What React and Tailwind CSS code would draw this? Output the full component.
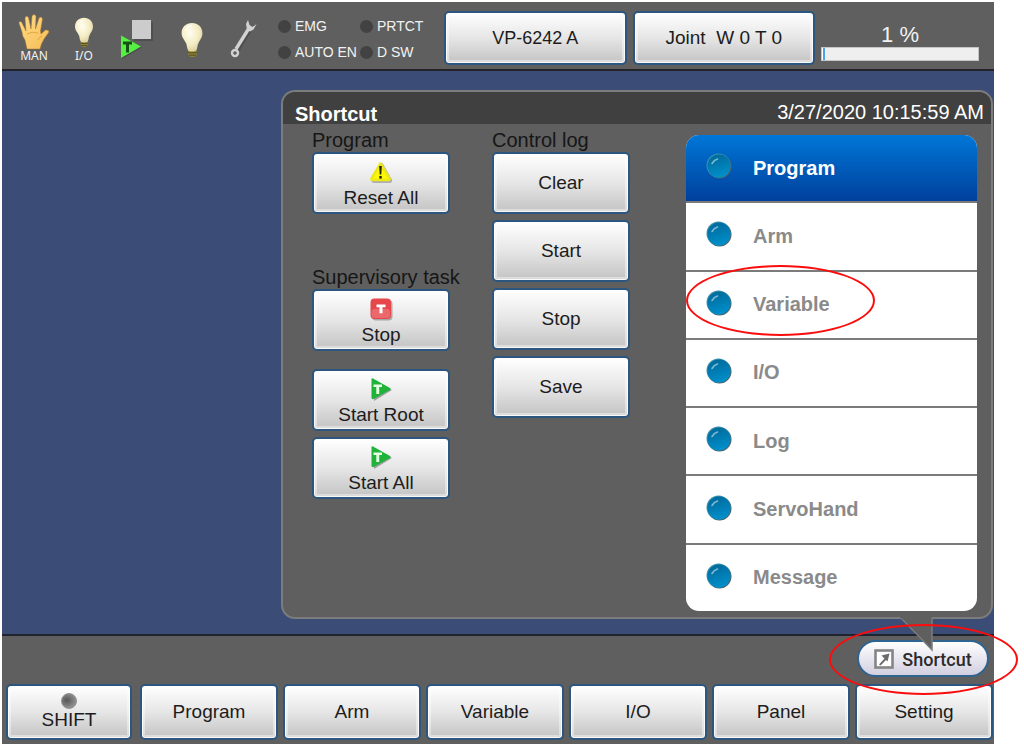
import React from "react";

const MENU = ["Program", "Arm", "Variable", "I/O", "Log", "ServoHand", "Message"];
const NAV = ["Program", "Arm", "Variable", "I/O", "Panel", "Setting"];

const BUTTON =
  "flex flex-col items-center rounded-[5px] border-2 border-[#2a567f] bg-linear-to-b from-white via-[#e6e6e6] to-[#c3c3c3] text-[#1c1c1c] shadow-[inset_0_0_0_1px_rgba(255,255,255,0.8),inset_0_0_0_3px_rgba(255,255,255,0.4)]";

function PlainButton({ children, className = "" }) {
  return (
    <button type="button" className={`${BUTTON} justify-center ${className}`}>
      {children}
    </button>
  );
}

function PanelButton({ icon, children }) {
  return (
    <button
      type="button"
      className={`${BUTTON} h-[62px] w-[138px] text-[19px] leading-[22px] ${icon ? "gap-[3px] pt-[6px]" : "justify-center"}`}
    >
      {icon}
      <span>{children}</span>
    </button>
  );
}

function HandIcon() {
  return (
    <svg width="32" height="36" viewBox="0 0 32 36" aria-hidden="true">
      <defs>
        <linearGradient id="hand" x1="0" y1="0" x2="1" y2="1">
          <stop offset="0" stopColor="#ffdb8c" />
          <stop offset="1" stopColor="#f6bd52" />
        </linearGradient>
      </defs>
      <path
        d="M9 35 L7 26 Q4 22 4 18 L1 9 Q1 6.500 3.500 8 L8 17 L7 4 Q8 1 10.500 3.500 L13 15 L14 2 Q16 -1 18 2 L17.500 15 L21 4 Q23.500 1.500 24.500 5 L22.500 17 L23 20 L27.500 16 Q31 15.500 31 18 L26 25 Q23 30 22 35 Z"
        fill="url(#hand)"
        stroke="#a5742c"
        strokeWidth="0.500"
        strokeLinejoin="round"
      />
      <path d="M9 20 Q14 17 20 19 M20 26 Q22 22 24 22" fill="none" stroke="#dd9c36" strokeWidth="0.800" />
    </svg>
  );
}

function BulbIcon({ className, id }) {
  return (
    <svg className={className} viewBox="0 0 24 38" aria-hidden="true">
      <defs>
        <radialGradient id={id} cx="0.4" cy="0.35" r="0.7">
          <stop offset="0" stopColor="#fffef0" />
          <stop offset="0.6" stopColor="#f4ecc4" />
          <stop offset="1" stopColor="#d9cd9c" />
        </radialGradient>
      </defs>
      <path d="M8 30h9v4q-1 3-4.500 3T8 34z" fill="#8d8336" />
      <path d="M8 32.500h9M9 35h7" stroke="#4d471c" strokeWidth="1" />
      <path
        d="M12 1C5.500 1 1 5.500 1 11.500c0 5 3.500 7.500 5 11.500.700 2 .500 5 2 7 1 1.500 7 1.500 8.500 0 1.500-2 1-5 2-7 1.500-4 4.500-6.500 4.500-11.500C23 5.500 18.500 1 12 1z"
        fill={`url(#${id})`}
      />
      <path d="M5 9q2-4 6-5" stroke="#ffffff" strokeWidth="1.500" fill="none" strokeLinecap="round" />
    </svg>
  );
}

function TaskStateIcon() {
  return (
    <svg width="34" height="42" viewBox="0 0 34 42" aria-hidden="true">
      <rect x="14" y="5" width="19" height="19" fill="#3f3f3f" opacity="0.5" />
      <rect x="12" y="3" width="19" height="19" fill="#cccccc" />
      <path d="M2 20 L22 30.500 L2 42 Z" fill="#3a3a3a" opacity="0.5" />
      <path d="M1 18.500 L21 29.500 L1 41 Z" fill="#55f043" />
      <path d="M3 24.500h9v3H9v8H6v-8H3z" fill="#174d16" />
    </svg>
  );
}

function WrenchIcon() {
  return (
    <svg width="28" height="40" viewBox="0 0 28 40" aria-hidden="true">
      <path d="M8 32 L20 12" stroke="#3f3f3f" opacity="0.5" strokeWidth="3.500" />
      <path d="M6 31 L18.500 11" stroke="#d2d2d2" strokeWidth="3.400" />
      <path d="M18 2 L16 6 L17 11.500 L20 13.500 L23.500 11.500 L26.500 6 L22.500 9 L19.500 7 Z" fill="#d2d2d2" />
      <circle cx="5" cy="35" r="3" fill="none" stroke="#d2d2d2" strokeWidth="2.400" />
    </svg>
  );
}

function WarningIcon() {
  return (
    <svg width="26" height="24" viewBox="0 0 26 24" aria-hidden="true">
      <path d="M14 4 L23 20 Q23.500 22 21.500 22 H6 Q4 22 4.500 20 Z" fill="#777777" stroke="#777777" strokeWidth="2" opacity="0.500" strokeLinejoin="round" />
      <path d="M12.500 3.500 L21.500 18.500 Q22 20 20.500 20 H4.500 Q3 20 3.500 18.500 Z" fill="#fdf900" stroke="#ece81a" strokeWidth="2.500" strokeLinejoin="round" />
      <path d="M11.200 6h2.600l-.5 8.500h-1.600z" fill="#222200" />
      <rect x="11.300" y="16" width="2.400" height="2.600" fill="#222200" />
    </svg>
  );
}

function StopTaskIcon() {
  return (
    <svg width="26" height="24" viewBox="0 0 26 24" aria-hidden="true">
      <rect x="4" y="3" width="20.500" height="20.500" rx="4" fill="#666666" opacity="0.5" />
      <rect x="2.500" y="1.500" width="20.500" height="20.500" rx="4" fill="#e5474b" />
      <rect x="3.500" y="12" width="18.500" height="9" rx="3" fill="#ef8083" opacity="0.600" />
      <path d="M8.500 7.500h9v2.700h-3v6h-3v-6h-3z" fill="#ffffff" />
    </svg>
  );
}

function StartTaskIcon() {
  return (
    <svg width="26" height="24" viewBox="0 0 26 24" aria-hidden="true">
      <path d="M5 3 L24 13 L6 24 Z" fill="#555555" opacity="0.5" />
      <path d="M3.500 2 Q3.500 1 5 1.500 L22 11 Q23.500 12 22 13 L5.500 22 Q3.500 22.500 3.500 21 Z" fill="#1fb339" />
      <path d="M5.500 7.500h8.500v2.600h-2.800v6.900h-2.900v-6.900H5.500z" fill="#e6ffe4" />
    </svg>
  );
}

function Lamp({ label }) {
  return (
    <span className="flex items-center gap-1">
      <span className="size-[13px] shrink-0 rounded-full bg-[#424242]" />
      <span className="whitespace-nowrap">{label}</span>
    </span>
  );
}

function MenuDot() {
  return (
    <svg width="26" height="26" viewBox="0 0 26 26" className="shrink-0" aria-hidden="true">
      <defs>
        <linearGradient id="dot" x1="0.3" y1="0" x2="0.6" y2="1">
          <stop offset="0" stopColor="#00699a" />
          <stop offset="1" stopColor="#0090cc" />
        </linearGradient>
      </defs>
      <circle cx="13.500" cy="13.500" r="12" fill="#4c6068" />
      <circle cx="12.500" cy="12.500" r="12" fill="#3a93b0" />
      <circle cx="13" cy="13" r="11.500" fill="url(#dot)" />
      <path d="M6 10.500q2-3.500 5.500-4.500" stroke="#7fb9d2" strokeWidth="1.600" fill="none" strokeLinecap="round" />
    </svg>
  );
}

function Highlight({ className }) {
  return (
    <span
      aria-hidden="true"
      className={`pointer-events-none absolute z-20 h-[71px] w-[189px] rounded-[50%] border-2 border-[#fb0d0d] ${className}`}
    />
  );
}

function StatusBar() {
  return (
    <header className="flex h-[69px] items-start border-b-2 border-[#22242a] bg-[#5f5f5f] text-[#f2f2f2]">
      <div className="flex shrink-0 font-['Noto_Sans',sans-serif] text-xs leading-3">
        <div className="ml-4 flex w-8 flex-col items-center pt-3">
          <HandIcon />
          <span>MAN</span>
        </div>
        <div className="ml-[18px] flex w-8 flex-col items-center gap-[2px] pt-[15px]">
          <BulbIcon id="bulb-io" className="h-[31px] w-5" />
          <span>I/O</span>
        </div>
        <div className="ml-5 pt-[15px]">
          <TaskStateIcon />
        </div>
        <div className="ml-[26px] pt-5">
          <BulbIcon id="bulb-motor" className="h-9 w-6" />
        </div>
        <div className="ml-[26px] pt-4">
          <WrenchIcon />
        </div>
      </div>
      <div className="ml-5 mt-3 grid shrink-0 grid-cols-[82px_84px] gap-y-[2px] text-sm leading-6">
        <Lamp label="EMG" />
        <Lamp label="PRTCT" />
        <Lamp label="AUTO EN" />
        <Lamp label="D SW" />
      </div>
      <div className="flex min-w-0 flex-1 gap-[6px] pt-[9px]">
        <PlainButton className="h-[54px] flex-1 text-[18px]">VP-6242 A</PlainButton>
        <PlainButton className="h-[54px] flex-1 text-[19px]">Joint&nbsp; W 0 T 0</PlainButton>
      </div>
      <div className="ml-[6px] mr-[15px] w-[158px] shrink-0 pt-5 text-center text-[22px] leading-[25px]">
        <span id="speed-label" className="block">1 %</span>
        <div role="progressbar" aria-labelledby="speed-label" aria-valuenow={1} aria-valuemin={0} aria-valuemax={100} className="h-[14px] border border-[#c6c6c6] bg-[#efefef]">
          <div className="h-full border-l border-white bg-[#4aa3e8]" style={{ width: "2%" }} />
        </div>
      </div>
    </header>
  );
}

function ShortcutPanel() {
  return (
    <section className="relative flex-1 rounded-[14px] border-2 border-[#7c7c7c] bg-[#5f5f5f]">
      <div className="flex h-8 items-end justify-between rounded-t-[12px] bg-[#404040] pl-3 pr-[7px] text-xl leading-5 text-white">
        <h1 className="font-bold">Shortcut</h1>
        <time className="pb-[2px]">3/27/2020 10:15:59 AM</time>
      </div>
      <div className="flex pb-[6px] pl-[29px] pr-[14px]">
        <div className="flex flex-1 gap-[42px] pt-1 text-xl leading-6 text-[#161616]">
          <div className="w-[138px]">
            <h2>Program</h2>
            <PanelButton icon={<WarningIcon />}>Reset All</PanelButton>
            <h2 className="mt-[51px] whitespace-nowrap">Supervisory task</h2>
            <PanelButton icon={<StopTaskIcon />}>Stop</PanelButton>
            <div className="mt-[18px] flex flex-col gap-[6px]">
              <PanelButton icon={<StartTaskIcon />}>Start Root</PanelButton>
              <PanelButton icon={<StartTaskIcon />}>Start All</PanelButton>
            </div>
          </div>
          <div className="w-[138px]">
            <h2>Control log</h2>
            <div className="flex flex-col gap-[6px]">
              <PanelButton>Clear</PanelButton>
              <PanelButton>Start</PanelButton>
              <PanelButton>Stop</PanelButton>
              <PanelButton>Save</PanelButton>
            </div>
          </div>
        </div>
        <ul className="mt-[11px] flex min-h-[476px] w-[291px] shrink-0 flex-col divide-y-2 divide-[#7b7b7b] overflow-hidden rounded-[13px] bg-white text-xl font-bold text-[#8a8a8a]">
          {MENU.map((name, i) => (
            <li key={name} className="relative flex flex-auto">
              <button
                type="button"
                className={`flex min-h-[66px] w-full items-center gap-[21px] pb-1 pl-5 text-left ${i === 0 ? "bg-linear-to-b from-[#0077d8] to-[#00409c] text-white" : ""}`}
              >
                <MenuDot />
                <span className="pt-[3px]">{name}</span>
              </button>
              {name === "Variable" && <Highlight className="-top-[7px] left-0" />}
            </li>
          ))}
        </ul>
      </div>
      <svg width="34" height="36" viewBox="0 0 34 36" className="absolute right-[57px] top-full z-10" aria-hidden="true">
        <path d="M0 0 L32 33 L32 0 Z" fill="#5f5f5f" />
        <path d="M1 1 L32 33 L32 1" fill="none" stroke="#7c7c7c" strokeWidth="1.500" />
        <path d="M0 0 H31 V3 H4 Z" fill="#5f5f5f" />
      </svg>
    </section>
  );
}

function Footer() {
  return (
    <footer className="border-t-2 border-[#20242e] bg-[#5f5f5f] pb-1 pl-1 pr-px pt-1">
      <div className="flex justify-end pr-1">
        <div className="relative">
          <button
            type="button"
            className="flex h-[37px] w-[132px] items-center justify-center gap-2 rounded-full border-2 border-[#2f6390] bg-linear-to-b from-white to-[#d2cfe0] font-['Roboto',sans-serif] text-[18px] font-medium text-[#2b2b2b]"
          >
            <svg width="20" height="20" viewBox="0 0 20 20" aria-hidden="true">
              <rect x="1.500" y="1.500" width="17" height="17" fill="#ffffff" stroke="#858585" strokeWidth="2.600" />
              <path d="M5 15.500 L10.500 9.500 L7.500 6.500 L15.500 4.500 L13.500 12.500 L12 11 L6.500 16.500 Z" fill="#6c6c6c" />
            </svg>
            <span className="pt-[2px]">Shortcut</span>
          </button>
          <Highlight className="-left-7 -top-4" />
        </div>
      </div>
      <nav className="mt-[7px] flex gap-[5px] text-[19px] leading-[22px]">
        <button type="button" className={`${BUTTON} mr-[3px] h-14 w-[126px] shrink-0 pt-[7px]`}>
          <span className="size-4 shrink-0 rounded-full border border-[#8f8f8f] bg-radial-[at_35%_45%] from-[#555555] to-[#a8a8a8]" />
          <span>SHIFT</span>
        </button>
        {NAV.map((name) => (
          <PlainButton key={name} className="h-14 flex-1">
            {name}
          </PlainButton>
        ))}
      </nav>
    </footer>
  );
}

export default function App() {
  return (
    <div className="bg-white pb-[7px] pl-[2px] pr-[30px] pt-[2px] font-['Liberation_Sans',Arial,sans-serif]">
      <div className="min-w-[960px]">
        <StatusBar />
        <main className="flex bg-[#3b4d76] pb-[15px] pl-[279px] pr-px pt-[19px]">
          <ShortcutPanel />
        </main>
        <Footer />
      </div>
    </div>
  );
}
